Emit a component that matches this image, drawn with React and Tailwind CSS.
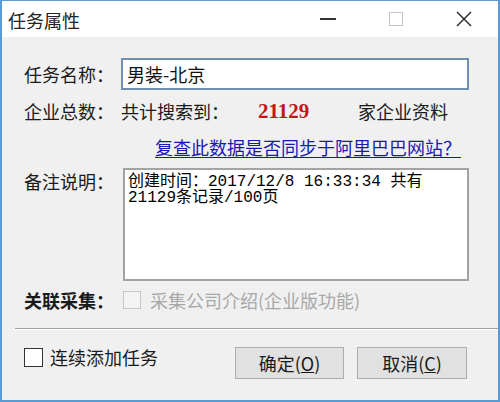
import React from 'react';

const font = { fontFamily: "'Noto Sans CJK SC', 'Noto Sans', sans-serif" };

const Label = ({ children, bold, className = '' }) => (
  <div className={`w-[97px] shrink-0 text-[18px] leading-[22px] text-[#1a1a1a] ${bold ? 'font-bold' : ''} ${className}`}>
    {children}
  </div>
);

const App = () => {
  return (
    <div
      className="w-[500px] h-[402px] overflow-hidden flex flex-col bg-white border-2 border-t border-[#5b9bd5]"
      style={font}
    >
      {/* Title bar */}
      <div className="h-[36px] shrink-0 flex items-center bg-white">
        <div className="pl-[6px] pt-[1px] text-[18px] leading-[22px] text-[#222] flex-1">任务属性</div>
        <div className="w-[68px] h-full flex items-center justify-center">
          <div className="w-[16px] h-[2px] bg-[#333]" />
        </div>
        <div className="w-[68px] h-full flex items-center justify-center">
          <div className="w-[14px] h-[14px] border border-[#c4c4c4]" />
        </div>
        <div className="w-[68px] h-full flex items-center justify-center">
          <svg width="16" height="16" viewBox="0 0 16 16">
            <path d="M1 1 L15 15 M15 1 L1 15" stroke="#222" strokeWidth="1.4" fill="none" />
          </svg>
        </div>
      </div>

      {/* Body */}
      <div className="flex-1 bg-[#f0f0f0] flex flex-col">
        <div className="pl-[22px] flex flex-col">
          {/* Task name */}
          <div className="mt-[21px] flex items-center h-[32px]">
            <Label>任务名称：</Label>
            <div className="w-[348px] h-[32px] bg-white border-2 border-[#6f90b0] flex items-center pl-[4px] text-[18px] text-[#111]">
              男装-北京
            </div>
          </div>

          {/* Total */}
          <div className="mt-[10px] flex items-center h-[22px]">
            <Label>企业总数：</Label>
            <div className="w-[137px] text-[18px] leading-[22px] text-[#1a1a1a]">共计搜索到：</div>
            <div
              className="w-[100px] text-[21px] leading-[22px] font-bold text-[#c4161c]"
              style={{ fontFamily: "'Liberation Serif', serif" }}
            >
              21129
            </div>
            <div className="text-[18px] leading-[22px] text-[#1a1a1a]">家企业资料</div>
          </div>

          {/* Link */}
          <div className="mt-[14px] h-[22px] flex items-center pl-[131px]">
            <span className="text-[18px] leading-[22px] text-[#1818b4] underline underline-offset-2">
              复查此数据是否同步于阿里巴巴网站？
            </span>
          </div>

          {/* Notes */}
          <div className="mt-[10px] flex items-start">
            <Label className="mt-[2px]">备注说明：</Label>
            <div
              className="ml-[2px] w-[346px] h-[113px] bg-white border-2 border-[#a3a3a3] pl-[3px] pt-[4px] text-[16px] leading-[16px] text-[#000] whitespace-pre"
              style={{ fontFamily: "'Liberation Mono', 'Noto Sans CJK SC', monospace" }}
            >
              {'创建时间：2017/12/8 16:33:34 共有\n21129条记录/100页'}
            </div>
          </div>

          {/* Related */}
          <div className="mt-[9px] flex items-center h-[20px]">
            <Label bold>关联采集：</Label>
            <div className="ml-[2px] w-[18px] h-[18px] border border-[#c8c8c8] bg-[#f4f4f4]" />
            <div className="ml-[9px] text-[18px] leading-[22px] text-[#a8a8a8]">采集公司介绍(企业版功能)</div>
          </div>
        </div>

        {/* Separator */}
        <div className="mt-[18px] ml-[13px] border-t border-[#a0a0a0]" />
        <div className="ml-[13px] border-t border-white" />

        {/* Bottom */}
        <div className="pl-[22px] mt-[17px] flex items-start">
          <div className="flex items-center h-[20px]">
            <div className="w-[19px] h-[19px] border-[1.5px] border-[#333] bg-white" />
            <div className="ml-[7px] text-[18px] leading-[22px] text-[#1a1a1a]">连续添加任务</div>
          </div>
          <div className="ml-auto mr-[31px] flex gap-[13px]">
            <button className="w-[109px] h-[32px] bg-[#e1e1e1] border border-[#adadad] text-[18px] leading-[22px] text-[#1a1a1a]">
              确定(<span className="underline">O</span>)
            </button>
            <button className="w-[110px] h-[32px] bg-[#e1e1e1] border border-[#adadad] text-[18px] leading-[22px] text-[#1a1a1a]">
              取消(<span className="underline">C</span>)
            </button>
          </div>
        </div>
      </div>
    </div>
  );
};

export default App;
